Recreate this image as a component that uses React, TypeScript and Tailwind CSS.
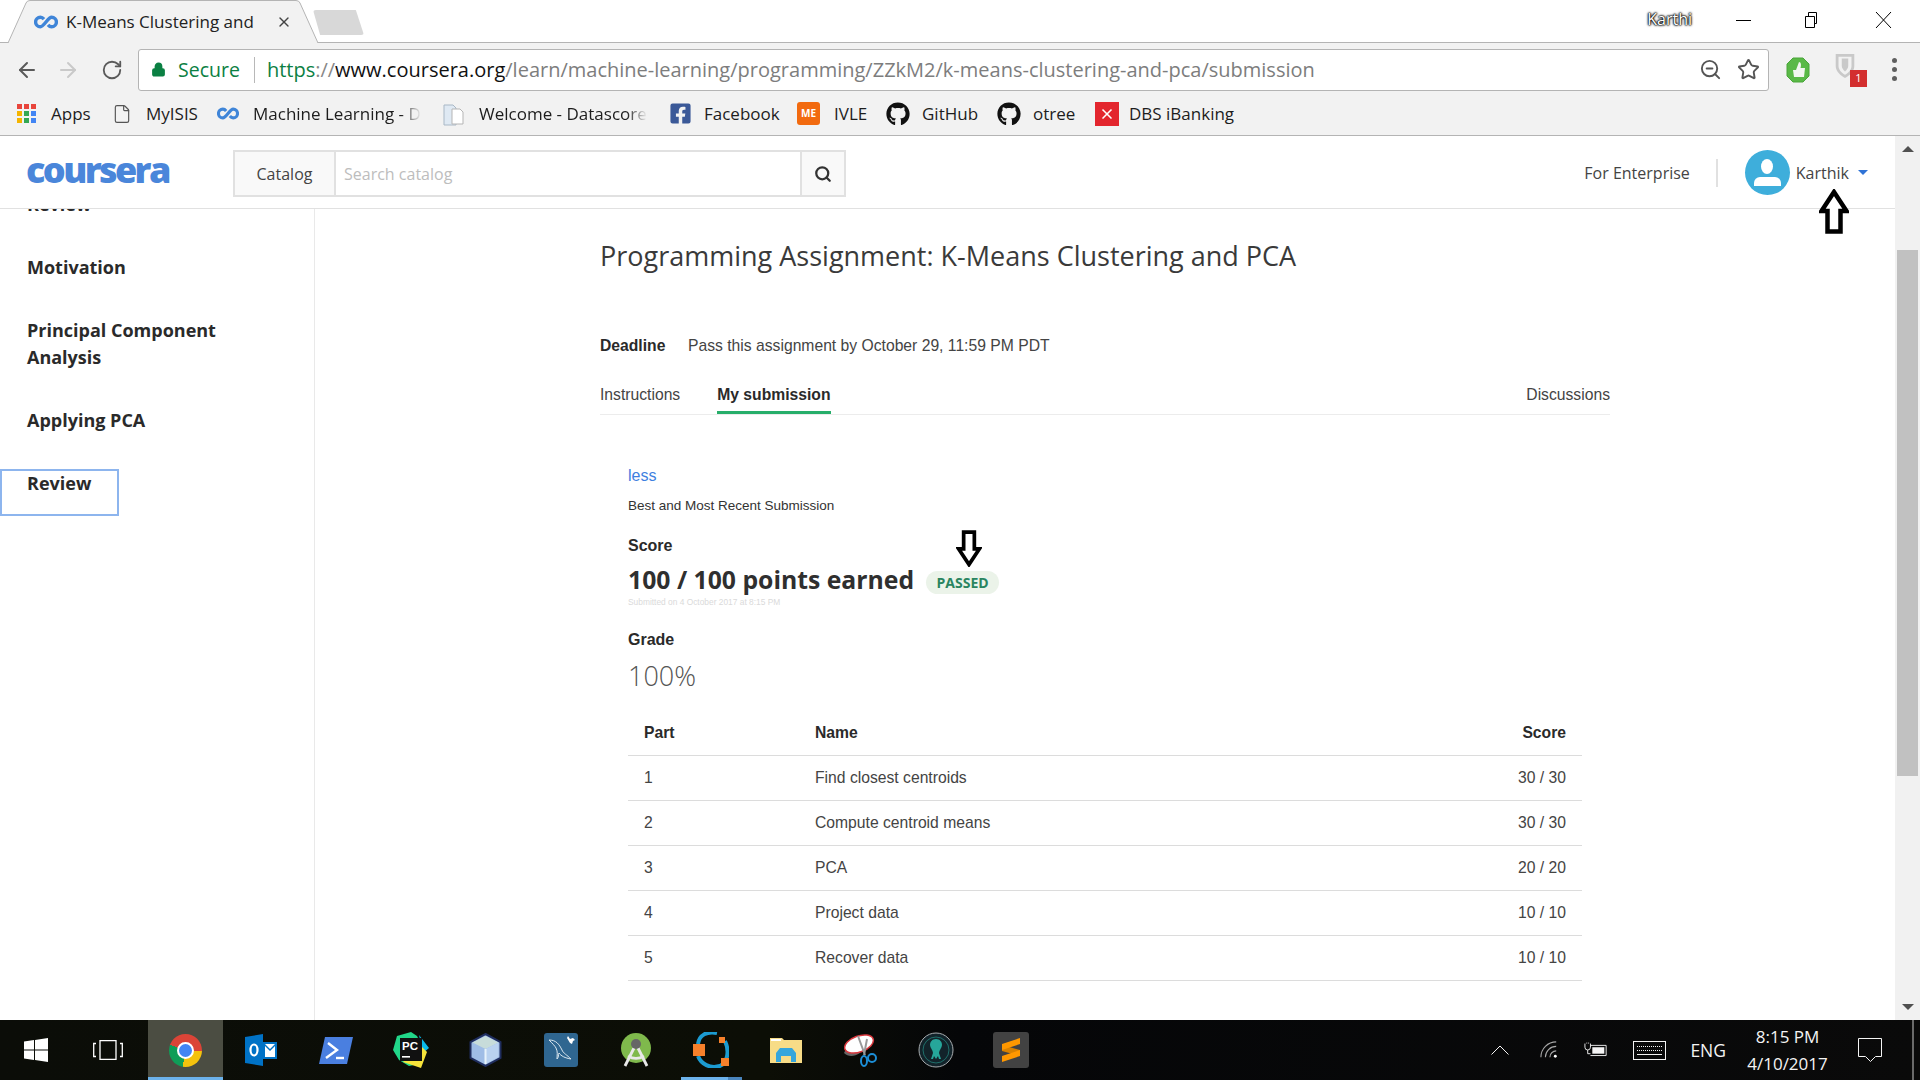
import { ArrowLeft, ArrowRight, RotateCw, Lock, ZoomOut, Star, Search, X, File } from "lucide-react";
import { FaGithub, FaFacebookSquare } from "react-icons/fa";

const sans = "font-['Open_Sans','Noto_Sans',sans-serif]";
const arial = "font-['Liberation_Sans',Arial,sans-serif]";

const rows = [
  { part: "1", name: "Find closest centroids", score: "30 / 30" },
  { part: "2", name: "Compute centroid means", score: "30 / 30" },
  { part: "3", name: "PCA", score: "20 / 20" },
  { part: "4", name: "Project data", score: "10 / 10" },
  { part: "5", name: "Recover data", score: "10 / 10" },
];

function Infinity2({ className }: { className?: string }) {
  return (
    <svg viewBox="0 0 24 14" className={className} fill="none" stroke="#3f85d8" strokeWidth="3.4">
      <path d="M10 4.2C9 3 7.7 2.2 6.4 2.2a4.8 4.8 0 0 0 0 9.6c3.6 0 7.6-9.6 11.2-9.6a4.8 4.8 0 0 1 0 9.6c-1.3 0-2.6-.8-3.6-2" />
    </svg>
  );
}

function BlockArrow({ down, className }: { down?: boolean; className?: string }) {
  return (
    <svg viewBox="0 0 30 45" className={className} fill="#fff" stroke="#000" strokeWidth="4.5">
      <path d={down ? "M8.5 2.5h13V23h6L15 42 2.5 23h6z" : "M8.5 42.5h13V22h6L15 3 2.5 22h6z"} />
    </svg>
  );
}

function AppsGrid() {
  const colors = ["#e8453c", "#e8453c", "#e8453c", "#f4b400", "#34a853", "#4285f4", "#f4b400", "#34a853", "#4285f4"];
  return (
    <div className="grid grid-cols-3 gap-[2px] w-[19px] shrink-0">
      {colors.map((c, i) => (
        <span key={i} className="size-[5px]" style={{ background: c }} />
      ))}
    </div>
  );
}

function Bookmark({ icon, label, fade, className }: { icon: React.ReactNode; label: string; fade?: boolean; className?: string }) {
  return (
    <div className={`flex items-center h-full text-[17px] text-[#1d1d1d] ${className ?? ""}`}>
      {icon}
      <span className={`whitespace-nowrap ${fade ? "[mask-image:linear-gradient(to_right,black_88%,transparent)]" : ""}`}>{label}</span>
    </div>
  );
}

function TitleBar() {
  return (
    <div className="h-[43px] flex items-end bg-white border-b border-[#b4b4b4] relative">
      <div className="ml-[8px] w-[310px] h-[43px] -mb-px relative flex items-center pl-[26px] shrink-0">
        <svg viewBox="0 0 310 43" className="absolute inset-0 w-full h-full">
          <path d="M0 43 18 3Q19 .5 22 .5H288Q291 .5 292 3L310 43" fill="#f2f2f2" stroke="#b4b4b4" />
        </svg>
        <Infinity2 className="w-[24px] h-[14px] shrink-0 relative" />
        <span className="relative ml-[8px] w-[195px] text-[17px] text-[#222] whitespace-nowrap">K-Means Clustering and</span>
        <X size={16} className="relative ml-[15px] text-[#444]" />
      </div>
      <div className="-ml-[5px] mb-[7px] w-[51px] h-[25px] bg-[#d8d8d8] rounded-[3px] [clip-path:polygon(0_0,84%_0,100%_100%,14%_100%)]" />
      <div className="ml-auto flex items-center self-start mt-[12px] mr-[28px]">
        <span className="text-[16px] leading-[16px] -mt-[3px] text-white [text-shadow:0_0_1px_#000,0_0_2px_#000,0_0_2px_#000,0_0_3px_#000] mr-[44px]">Karthi</span>
        <span className="w-[15px] h-px bg-black mr-[54px]" />
        <svg width="15" height="16" viewBox="0 0 15 16" fill="none" stroke="#000" className="mr-[55px]">
          <path d="M.5 4.5h9v11h-9zM3.5 4.5V.5h8v11h-2" />
        </svg>
        <svg width="17" height="16" viewBox="0 0 17 16" stroke="#000">
          <path d="M1 0l15 16M16 0L1 16" />
        </svg>
      </div>
    </div>
  );
}

function AddressBar() {
  return (
    <div className="h-[50px] pt-[3px] bg-[#f2f2f2] flex items-center">
      <ArrowLeft size={24} strokeWidth={2} className="ml-[15px] text-[#5a5a5a]" />
      <ArrowRight size={24} strokeWidth={2} className="ml-[17px] text-[#c9c9c9]" />
      <RotateCw size={22} strokeWidth={2} className="ml-[21px] text-[#5a5a5a]" />
      <div className="ml-[15px] w-[1631px] h-[42px] bg-white border border-[#b4b4b4] rounded-[3px] flex items-center">
        <Lock size={15} fill="#0b8043" strokeWidth={2.4} className="ml-[12px] text-[#0b8043]" />
        <span className="ml-[12px] text-[19.5px] text-[#0b8043]">Secure</span>
        <span className="ml-[14px] w-px h-[26px] bg-[#b8b8b8]" />
        <span className="ml-[12px] text-[20px] whitespace-nowrap">
          <span className="text-[#0b8043]">https</span>
          <span className="text-[#888]">://</span>
          <span className="text-[#111]">www.coursera.org</span>
          <span className="text-[#7d7d7d]">/learn/machine-learning/programming/ZZkM2/k-means-clustering-and-pca/submission</span>
        </span>
        <ZoomOut size={23} strokeWidth={2} className="ml-auto text-[#555]" />
        <Star size={23} strokeWidth={2} className="ml-[15px] mr-[8px] text-[#555]" />
      </div>
      <svg width="24" height="26" viewBox="0 0 24 26" className="ml-[17px]">
        <path d="M7 1h10l6 6v12l-6 6H7l-6-6V7z" fill="#5ab947" stroke="#4aa63b" />
        <path d="M7 13h3l3-8c2 0 2.5 3 1.5 6H19l-1 9H8z" fill="#f2f6f0" />
      </svg>
      <div className="relative ml-[24px] w-[24px] h-[34px]">
        <svg width="22" height="26" viewBox="0 0 22 28">
          <path d="M1 1h20v13c0 6-5 10-10 13C6 24 1 20 1 14z" fill="#c9c9c9" />
          <path d="M4 4h14v10c0 4-3 7-7 9.5C7 21 4 18 4 14z" fill="#f2f2f2" />
          <path d="M7.5 6h7v8c0 2-1.500 4-3.500 6-2-2-3.500-4-3.500-6z" fill="#c9c9c9" />
        </svg>
        <span className="absolute right-[-9px] bottom-0 w-[17px] h-[17px] bg-[#d32f2f] text-white text-[11px] flex items-center justify-center">1</span>
      </div>
      <div className="ml-[34px] flex flex-col gap-[4px]">
        <span className="size-[5px] rounded-full bg-[#5f5f5f]" />
        <span className="size-[5px] rounded-full bg-[#5f5f5f]" />
        <span className="size-[5px] rounded-full bg-[#5f5f5f]" />
      </div>
    </div>
  );
}

function Bookmarks() {
  return (
    <div className="h-[43px] pb-[1px] bg-[#f2f2f2] border-b border-[#b4b4b4] flex items-center pl-[17px]">
      <Bookmark icon={<AppsGrid />} label="Apps" className="w-[95px] gap-[15px]" />
      <Bookmark icon={<File size={20} strokeWidth={1.4} className="text-[#555] shrink-0" />} label="MyISIS" className="w-[105px] gap-[14px]" />
      <Bookmark icon={<Infinity2 className="w-[22px] h-[13px] shrink-0" />} label="Machine Learning - D" fade className="w-[226px] gap-[14px]" />
      <Bookmark
        icon={
          <svg width="22" height="24" viewBox="0 0 22 24" className="shrink-0">
            <path d="M1 3h9l3 3v17H1z" fill="#dfe9f3" stroke="#a9b8c6" />
            <path d="M9 7h8l3 3v12H9z" fill="#fff" stroke="#b5b5b5" />
          </svg>
        }
        label="Welcome - Datascore"
        fade
        className="w-[226px] gap-[14px]"
      />
      <Bookmark icon={<FaFacebookSquare size={23} className="text-[#3b5998] shrink-0" />} label="Facebook" className="w-[128px] gap-[12px]" />
      <Bookmark
        icon={<span className="size-[23px] shrink-0 rounded-[3px] bg-[#f26a0f] text-white text-[10px] font-bold flex items-center justify-center">ME</span>}
        label="IVLE"
        className="w-[89px] gap-[14px]"
      />
      <Bookmark icon={<FaGithub size={24} className="text-[#111] shrink-0" />} label="GitHub" className="w-[111px] gap-[12px]" />
      <Bookmark icon={<FaGithub size={24} className="text-[#111] shrink-0" />} label="otree" className="w-[98px] gap-[12px]" />
      <Bookmark
        icon={
          <span className="size-[24px] shrink-0 bg-[#e3262e] text-white flex items-center justify-center">
            <X size={16} strokeWidth={2.5} />
          </span>
        }
        label="DBS iBanking"
        className="gap-[10px]"
      />
    </div>
  );
}

function Header() {
  return (
    <div className="h-[73px] pt-[3px] shrink-0 bg-white border-b border-[#e1e1e1] flex items-center pl-[26px] pr-[27px]">
      <span className={`w-[144px] shrink-0 text-[#4a86da] text-[36px] font-extrabold tracking-[-2.6px] leading-none -mt-[8px] ${sans}`}>coursera</span>
      <div className="ml-[63px] h-[47px] w-[613px] flex border-2 border-[#e1e1e1]">
        <div className={`w-[101px] bg-[#f9f9f9] border-r-2 border-[#e1e1e1] text-[#444] text-[16px] flex items-center justify-center ${sans}`}>Catalog</div>
        <div className={`flex-1 pl-[8px] text-[#bdbdbd] text-[16px] flex items-center ${sans}`}>Search catalog</div>
        <div className="w-[44px] bg-[#f9f9f9] border-l-2 border-[#e1e1e1] flex items-center justify-center">
          <Search size={18} strokeWidth={3} className="text-[#333]" />
        </div>
      </div>
      <span className={`ml-auto -mt-[2px] text-[16px] text-[#444] ${sans}`}>For Enterprise</span>
      <span className="ml-[26px] -mt-[2px] w-[2px] h-[28px] bg-[#e1e1e1]" />
      <div className="ml-[27px] -mt-[2px] size-[45px] rounded-full bg-[#3eaedb] flex flex-col items-center justify-center gap-[3px]">
        <span className="w-[12px] h-[15px] rounded-[50%] bg-white" />
        <span className="w-[27px] h-[9px] rounded-t-[6px] bg-white" />
      </div>
      <span className={`ml-[6px] -mt-[2px] text-[16px] text-[#444] ${sans}`}>Karthik</span>
      <span className="ml-[9px] mb-[3px] border-x-[5px] border-x-transparent border-t-[5px] border-t-[#2f73d6]" />
    </div>
  );
}

function Sidebar() {
  const item = `text-[18px] font-bold text-[#2a2a2a] leading-[27px] ${sans}`;
  return (
    <aside className="w-[315px] shrink-0 border-r border-[#e9e9e9] pl-[27px] relative overflow-hidden">
      <p className={`${item} -mt-[18px]`}>Review</p>
      <p className={`${item} mt-[36px]`}>Motivation</p>
      <p className={`${item} mt-[36px] w-[210px]`}>Principal Component Analysis</p>
      <p className={`${item} mt-[36px]`}>Applying PCA</p>
      <div className={`${item} mt-[35px] -ml-[27px] w-[119px] h-[47px] pl-[25px] !leading-[24px] border-2 border-[#8db5ee]`}>Review</div>
    </aside>
  );
}

function Main() {
  return (
    <main className="flex-1 pl-[285px] overflow-hidden">
      <div className={`w-[1010px] ${arial}`}>
        <h1 className={`mt-[28px] text-[27px] leading-[38px] text-[#3a3a3a] font-normal ${sans}`}>Programming Assignment: K-Means Clustering and PCA</h1>
        <div className="mt-[59px] flex text-[15.7px] leading-[24px] text-[#444]">
          <span className="font-bold text-[#2a2a2a] w-[88px]">Deadline</span>
          <span>Pass this assignment by October 29, 11:59 PM PDT</span>
        </div>
        <div className="mt-[25px] h-[31px] box-content flex text-[15.7px] text-[#444] border-b border-[#ececec]">
          <span className="mr-[37px] leading-[24px]">Instructions</span>
          <span className="font-bold text-[#2a2a2a] leading-[24px] h-[31px] border-b-[3px] border-[#27ae6a]">My submission</span>
          <span className="ml-auto leading-[24px]">Discussions</span>
        </div>
        <div className="pl-[28px] pr-[28px]">
          <p className="mt-[49px] text-[16px] leading-[24px] text-[#3f7fe0]">less</p>
          <p className="mt-[8px] text-[13.5px] leading-[20px] text-[#333]">Best and Most Recent Submission</p>
          <p className="mt-[18px] text-[16px] leading-[24px] font-bold text-[#2a2a2a]">Score</p>
          <div className="mt-[3px] h-[38px] flex items-center">
            <span className={`text-[24.75px] font-bold text-[#2f2f2f] ${sans}`}>100 / 100 points earned</span>
            <span className={`ml-[12px] mt-[4px] w-[73px] h-[23px] rounded-full bg-[#ebf3e9] text-[#2a8560] text-[14px] font-bold flex items-center justify-center ${sans}`}>PASSED</span>
          </div>
          <p className="-mt-[2px] text-[8.4px] leading-[10px] text-[#dadada]">Submitted on 4 October 2017 at 8:15 PM</p>
          <p className="mt-[21px] text-[16px] leading-[24px] font-bold text-[#2a2a2a]">Grade</p>
          <p className={`mt-[6px] text-[27px] leading-[36px] text-[#555] font-light ${sans}`}>100%</p>
          <div className="mt-[17px] text-[15.7px] text-[#444]">
            <div className="h-[45px] flex items-center px-[16px] font-bold text-[#2a2a2a] border-b border-[#dcdcdc]">
              <span className="w-[171px]">Part</span>
              <span className="flex-1">Name</span>
              <span>Score</span>
            </div>
            {rows.map((row) => (
              <div key={row.part} className="h-[45px] flex items-center px-[16px] border-b border-[#dcdcdc]">
                <span className="w-[171px]">{row.part}</span>
                <span className="flex-1">{row.name}</span>
                <span>{row.score}</span>
              </div>
            ))}
          </div>
        </div>
      </div>
    </main>
  );
}

function Scrollbar() {
  return (
    <div className="w-[25px] shrink-0 bg-[#f1f1f1] flex flex-col items-center">
      <span className="mt-[10px] border-x-[6px] border-x-transparent border-b-[6px] border-b-[#505050]" />
      <div className="mt-[98px] w-[21px] h-[526px] bg-[#c1c1c1]" />
      <span className="mt-auto mb-[10px] border-x-[6px] border-x-transparent border-t-[6px] border-t-[#505050]" />
    </div>
  );
}

function TaskIcon({ children, active }: { children: React.ReactNode; active?: boolean }) {
  return (
    <div className={`w-[75px] h-full flex items-center justify-center relative ${active ? "bg-[#4b4d42]" : ""}`}>
      {children}
      {active && <span className="absolute bottom-0 inset-x-0 h-[3px] bg-[#6cb2eb]" />}
    </div>
  );
}

function Taskbar() {
  return (
    <div className="h-[60px] bg-[linear-gradient(to_right,#0b0d08,#0c0e06_40%,#050608_50%,#0a0a0a)] flex items-center text-white">
      <div className="w-[72px] shrink-0 flex justify-center">
        <svg width="24" height="24" viewBox="0 0 24 24" fill="#fff">
          <path d="M0 3.4 10 2v9.4H0zM11 1.9 24 0v11.4H11zM0 12.5h10V22L0 20.6zM11 12.5h13V24l-13-1.9z" />
        </svg>
      </div>
      <div className="w-[76px] shrink-0 flex justify-center pr-[5px]">
        <svg width="30" height="20" viewBox="0 0 30 20" fill="none" stroke="#fff" strokeWidth="1.3">
          <path d="M7 .7h16v18.6H7zM3 3.5H.7v13H3M27 3.5h2.3v13H27" />
        </svg>
      </div>
      <TaskIcon active>
        <div className="size-[33px] rounded-full bg-[conic-gradient(from_-70deg,#db4437_0_160deg,#f4c20d_160deg_260deg,#0f9d58_260deg_360deg)] flex items-center justify-center">
          <span className="size-[13px] rounded-full bg-[#4285f4] border-2 border-white box-content" />
        </div>
      </TaskIcon>
      <TaskIcon>
        <svg width="32" height="32" viewBox="0 0 32 32">
          <path d="M0 3l18-3v32L0 29z" fill="#0072c6" />
          <path d="M18 8h14v17H18z" fill="#0072c6" />
          <path d="M20 10h10l-5 5z M20 12l5 5 5-5v11H20z" fill="#fff" />
          <ellipse cx="9" cy="16" rx="3.5" ry="5.5" fill="none" stroke="#fff" strokeWidth="2.2" />
        </svg>
      </TaskIcon>
      <TaskIcon>
        <svg width="34" height="27" viewBox="0 0 34 27">
          <path d="M6 0h28l-6 27H0z" fill="#4a7fe0" />
          <path d="M9 6l9 7-11 8" fill="none" stroke="#fff" strokeWidth="2.4" />
          <path d="M17 21h8" stroke="#fff" strokeWidth="2.4" />
        </svg>
      </TaskIcon>
      <TaskIcon>
        <svg width="36" height="36" viewBox="0 0 36 36">
          <path d="M4 4l14-4 6 4 6 12-4 16-10 2-10-6L0 18z" fill="#21d789" />
          <path d="M26 3l10 13-6 5z" fill="#09b9e8" />
          <path d="M10 30l18 6 6-16-8-8z" fill="#f6e33a" />
          <rect x="7" y="6" width="22" height="23" fill="#111" />
          <text x="9" y="18" fontSize="11.5" fontWeight="700" fill="#fff" fontFamily="Liberation Sans">PC</text>
          <rect x="9" y="24" width="8" height="1.6" fill="#fff" />
        </svg>
      </TaskIcon>
      <TaskIcon>
        <svg width="33" height="34" viewBox="0 0 33 34">
          <path d="M16.5 1l15 8v16l-15 8-15-8V9z" fill="#9fbde6" stroke="#1f2d5e" strokeWidth="2" />
          <path d="M16.5 3l13 6.5-13 6.5-13-6.5z" fill="#c7dcda" />
          <path d="M16.5 16l13-6.5v14.5l-13 7z" fill="#b9d2f0" />
          <path d="M16.5 16v15" stroke="#e6f2fb" strokeWidth="2" />
        </svg>
      </TaskIcon>
      <TaskIcon>
        <svg width="34" height="34" viewBox="0 0 34 34">
          <rect width="34" height="34" rx="3" fill="#2f6690" />
          <path d="M5 7c7 0 10 4 13 10 1 3 5 5 9 9-6-1-10-3-12-6-1 2 0 4-2 6 0-4 1-7-1-11-1-2-4-5-7-8z" fill="none" stroke="#dbe8f0" strokeWidth="1" />
          <path d="M24 3l2 3 3-1 2 2-2 1-1 3-2-1-3-5z" fill="#fff" />
        </svg>
      </TaskIcon>
      <TaskIcon>
        <svg width="30" height="34" viewBox="0 0 30 34">
          <circle cx="15" cy="15" r="15" fill="#7fb94c" />
          <path d="M15 11 4 33M15 11l11 22M7 23c5 3 11 3 16 0" stroke="#e8e8e8" strokeWidth="2.8" fill="none" />
          <circle cx="15" cy="11" r="5" fill="#666" />
        </svg>
      </TaskIcon>
      <div className="w-[75px] h-full flex items-center justify-center relative">
        <svg width="36" height="36" viewBox="0 0 36 36" fill="none">
          <path d="M24 1C14-1 6 3 5 12M5 24c3 8 12 13 22 10 7-3 10-14 5-25" stroke="#1c9bd1" strokeWidth="4" />
          <rect x="0" y="12" width="12" height="12" fill="#f6802b" />
          <rect x="26" y="5" width="6" height="6" fill="#f6802b" />
          <rect x="28" y="26" width="8" height="8" fill="#f6802b" />
        </svg>
        <span className="absolute bottom-0 left-[8px] w-[47px] h-[3px] bg-[#6cb2eb]" />
        <span className="absolute bottom-0 left-[55px] w-[14px] h-[3px] bg-[#4a85bd]" />
      </div>
      <TaskIcon>
        <svg width="32" height="26" viewBox="0 0 32 26">
          <path d="M0 1h12l2 2h18v23H0z" fill="#f7dc87" />
          <path d="M1 2h10v2H1z" fill="#fff" />
          <path d="M6 25V16l4-5h12l4 5v9h-5v-6H11v6z" fill="#35a6dc" />
        </svg>
      </TaskIcon>
      <TaskIcon>
        <svg width="33" height="34" viewBox="0 0 33 34" fill="none">
          <path d="M0 20c4 4 10 4 16 0l-2-4H2z" fill="#666" />
          <ellipse cx="15" cy="11" rx="15" ry="8" fill="#fff" stroke="#d8373d" strokeWidth="1.5" transform="rotate(-20 15 11)" />
          <path d="M14 3l7 19M23 6l-3 16" stroke="#999" strokeWidth="2" />
          <ellipse cx="20" cy="28" rx="3" ry="5" stroke="#1c8ed6" strokeWidth="2" />
          <ellipse cx="28" cy="25" rx="4" ry="4" stroke="#1c8ed6" strokeWidth="2" />
        </svg>
      </TaskIcon>
      <TaskIcon>
        <svg width="36" height="36" viewBox="0 0 36 36" fill="none">
          <circle cx="18" cy="18" r="17" fill="#12232a" stroke="#a9adb0" />
          <circle cx="18" cy="18" r="13" stroke="#1f6f6a" />
          <path d="M18 7c4 0 6 3 6 6s-3 5-3 8l2 6h-2l-1-3-2 3-2-3-1 3h-2l2-6c0-3-3-5-3-8s2-6 6-6z" fill="#26a69a" />
        </svg>
      </TaskIcon>
      <TaskIcon>
        <div className="size-[36px] rounded-[3px] bg-[#424242] flex items-center justify-center">
          <svg width="20" height="26" viewBox="0 0 20 26">
            <path d="M1 8l18 5v6L1 14z" fill="#d98200" />
            <path d="M1 7l18-6v6L1 13zM1 19l18-6v6L1 25z" fill="#ff9800" />
          </svg>
        </div>
      </TaskIcon>
      <div className="ml-auto flex items-center h-full text-[#f4f4f4]">
        <svg width="18" height="10" viewBox="0 0 18 10" fill="none" stroke="#f4f4f4" className="mr-[31px]">
          <path d="M.5 9.5 9 1l8.5 8.5" />
        </svg>
        <svg width="18" height="18" viewBox="0 0 20 20" fill="none" stroke="#a8a8a8" strokeWidth="1.2" className="mr-[26px]">
          <path d="M1 18A17 17 0 0 1 18 1M6 18A12 12 0 0 1 18 6M11 18a7 7 0 0 1 7-7" />
          <circle cx="17" cy="17" r="1.6" fill="#fff" stroke="none" />
        </svg>
        <svg width="24" height="16" viewBox="0 0 26 16" fill="none" stroke="#f4f4f4" className="mr-[25px]">
          <path d="M1 1v4a3 3 0 0 0 6 0V1M3 1V0M5 1V0M4 8v4h3" />
          <path d="M7 3h17v11H7" />
          <rect x="9" y="5" width="13" height="7" fill="#f4f4f4" stroke="none" />
        </svg>
        <div className="mr-[24px] w-[33px] h-[19px] border border-[#f4f4f4] flex flex-col justify-center gap-[3px] px-[3px]">
          <span className="border-t border-dotted border-[#f4f4f4]" />
          <span className="border-t border-dotted border-[#f4f4f4]" />
          <span className="border-t border-[#f4f4f4]" />
        </div>
        <span className={`text-[17.5px] mr-[20px] ${sans}`}>ENG</span>
        <div className={`w-[83px] mr-[29px] text-center text-[17px] leading-[27px] whitespace-nowrap ${sans}`}>
          <div>8:15 PM</div>
          <div>4/10/2017</div>
        </div>
        <svg width="24" height="25" viewBox="0 0 24 25" fill="none" stroke="#f4f4f4" className="mr-[30px]">
          <path d="M.5.5h23v18h-6l-5 5-5-5h-7z" />
        </svg>
        <span className="w-[2px] h-full bg-[#6a6a6a] mr-[6px]" />
      </div>
    </div>
  );
}

export default function App() {
  return (
    <div className={`w-[1920px] h-[1080px] flex flex-col overflow-hidden bg-white ${sans}`}>
      <TitleBar />
      <AddressBar />
      <Bookmarks />
      <div className="flex flex-1 min-h-0">
        <div className="flex-1 min-w-0 flex flex-col">
          <Header />
          <div className="flex flex-1 min-h-0">
            <Sidebar />
            <Main />
          </div>
        </div>
        <Scrollbar />
      </div>
      <Taskbar />
      <BlockArrow className="absolute left-[1819px] top-[189px] w-[30px] h-[45px]" />
      <BlockArrow down className="absolute left-[956px] top-[530px] w-[26px] h-[37px]" />
    </div>
  );
}
